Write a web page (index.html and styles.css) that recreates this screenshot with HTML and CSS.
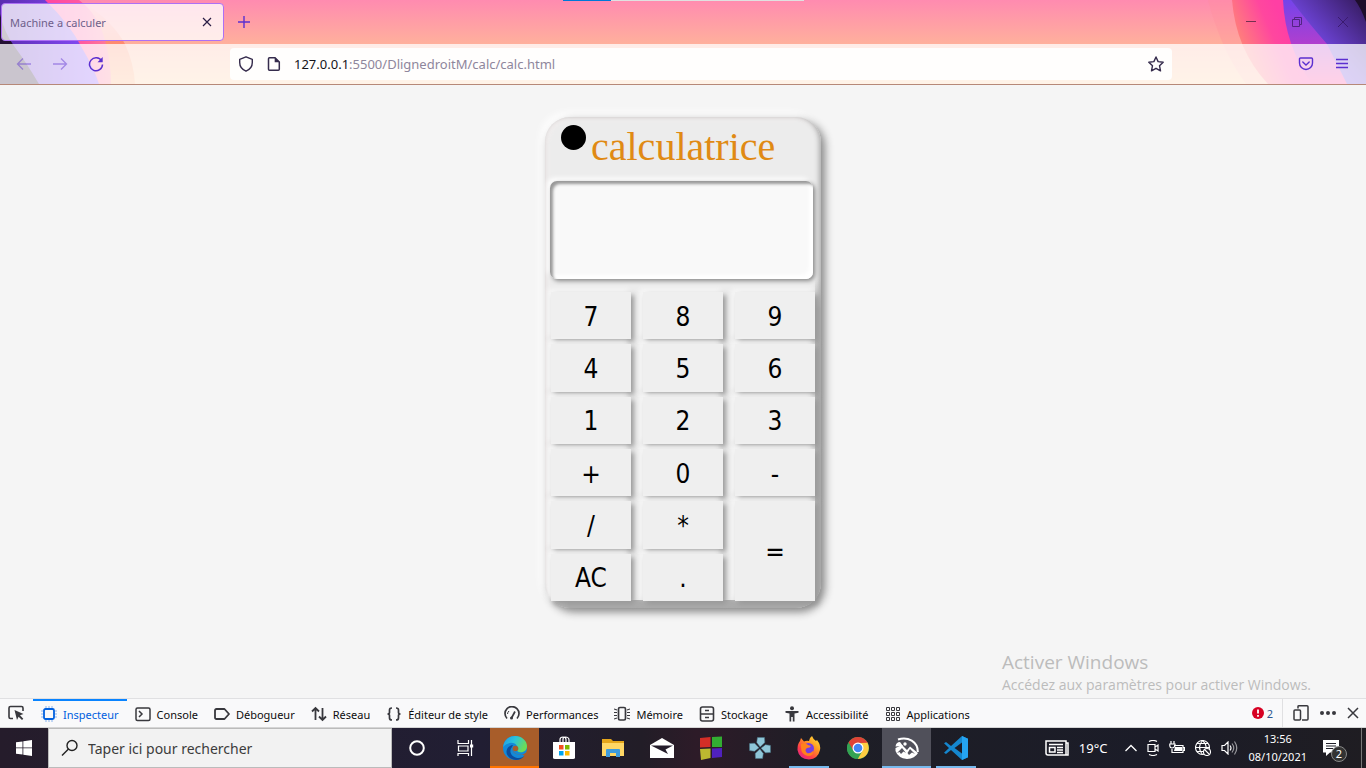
FILE: index.html
```html
<!DOCTYPE html>
<html lang="fr">
<head>
<meta charset="utf-8">
<title>Machine a calculer</title>
<link rel="stylesheet" href="styles.css">
</head>
<body>
<header class="browser">
  <svg class="art art-left" width="140" height="84" viewBox="0 0 140 84" aria-hidden="true">
    <defs>
      <linearGradient id="la" x1="0" y1="0" x2="1" y2="0"><stop offset="0" stop-color="#ff2fa0"/><stop offset=".75" stop-color="#ff5aa0"/><stop offset="1" stop-color="#ff7f96"/></linearGradient>
      <linearGradient id="lb" x1="0" y1="0" x2="1" y2="0"><stop offset="0" stop-color="#5a2bb0"/><stop offset="1" stop-color="#8a50ff"/></linearGradient>
      <linearGradient id="lc" x1="0" y1="0" x2="0" y2="1"><stop offset="0" stop-color="#ff8fb0"/><stop offset=".5" stop-color="#ff8a70"/><stop offset="1" stop-color="#ffb27a"/></linearGradient>
    </defs>
    <path d="M80 0Q112 20 125 44Q134 64 135 84H60V0Z" fill="url(#lc)"/>
    <path d="M0 0H79Q98 14 105 40Q111 62 111 84H0Z" fill="url(#la)"/>
    <path d="M0 0H45Q70 24 82 48Q94 68 99 84H0Z" fill="url(#lb)"/>
    <path d="M0 14Q4 32 14 46Q26 62 39 84H0Z" fill="#241033"/>
  </svg>
  <svg class="art art-right" width="180" height="84" viewBox="0 0 180 84" aria-hidden="true">
    <defs>
      <linearGradient id="ra" gradientUnits="userSpaceOnUse" x1="46" y1="30" x2="92" y2="10"><stop offset="0" stop-color="#ff8478"/><stop offset=".7" stop-color="#ff479e"/><stop offset="1" stop-color="#ff3fa4"/></linearGradient>
      <linearGradient id="rb" x1="0" y1="0" x2="0" y2="1"><stop offset="0" stop-color="#7444ea"/><stop offset=".5" stop-color="#ad3fd0"/><stop offset="1" stop-color="#ff3f9b"/></linearGradient>
      <linearGradient id="rc" x1="1" y1="0" x2="0" y2="1"><stop offset="0" stop-color="#33195a"/><stop offset=".5" stop-color="#6840cc"/><stop offset="1" stop-color="#8b57ff"/></linearGradient>
    </defs>
    <path d="M22 0Q35 50 60 84H100V0Z" fill="#ff8f9c" opacity=".3"/>
    <path d="M46 0Q50 50 82 84H180V0Z" fill="url(#ra)"/>
    <path d="M97 0Q99 46 126 84H180V0Z" fill="url(#rb)"/>
    <path d="M105 0Q125 26 141 44L161 84H180V0Z" fill="url(#rc)"/>
    <path d="M169 0Q175 8 180 22V0Z" fill="#1d0d2b"/>
  </svg>
  <div class="progress"></div>
  <div class="tabbar">
    <div class="tab"><span>Machine a calculer</span>
      <button class="icon-btn" aria-label="Fermer l'onglet"><svg width="10" height="10" viewBox="0 0 10 10" fill="none" stroke="#2b1d45" stroke-width="1.2"><path d="M1 1L9 9M9 1L1 9"/></svg></button>
    </div>
    <button class="icon-btn new-tab" aria-label="Nouvel onglet"><svg width="12" height="12" viewBox="0 0 12 12" fill="none" stroke="#5b2fd0" stroke-width="1.4"><path d="M6 0V12M0 6H12"/></svg></button>
    <div class="window-controls">
      <button class="icon-btn" aria-label="Réduire"><svg width="10" height="10" viewBox="0 0 10 10" fill="none" stroke="#75304f"><path d="M0 4.500H10"/></svg></button>
      <button class="icon-btn" aria-label="Restaurer"><svg width="10" height="10" viewBox="0 0 10 10" fill="none" stroke="#522482"><path d="M.5 2.500H7.500V9.500H.5ZM2.500 2V.5H9.500V7.500H8"/></svg></button>
      <button class="icon-btn" aria-label="Fermer"><svg width="10" height="10" viewBox="0 0 10 10" fill="none" stroke="#3b1b70"><path d="M0 0L10 10M10 0L0 10"/></svg></button>
    </div>
  </div>
  <nav class="navbar">
    <div class="nav-buttons">
      <button class="icon-btn dim" aria-label="Précédent"><svg width="16" height="16" viewBox="0 0 16 16" fill="none" stroke="#5b2fd0" stroke-width="1.3"><path d="M15 8H1.500M7 2.500L1.500 8L7 13.500"/></svg></button>
      <button class="icon-btn dim" aria-label="Suivant"><svg width="16" height="16" viewBox="0 0 16 16" fill="none" stroke="#5b2fd0" stroke-width="1.3"><path d="M1 8H14.500M9 2.500L14.500 8L9 13.500"/></svg></button>
      <button class="icon-btn" aria-label="Actualiser"><svg width="16" height="16" viewBox="0 0 16 16" fill="none" stroke="#5b2fd0" stroke-width="1.5"><path d="M13.600 5A6.500 6.500 0 1 0 14.500 8.500"/><path d="M14.700 1V6.200H9.500Z" fill="#5b2fd0" stroke="none"/></svg></button>
    </div>
    <div class="urlbar">
      <svg width="16" height="16" viewBox="0 0 16 16" fill="none" stroke="#352b4c" stroke-width="1.4"><path d="M8 .8L14.300 3.300V6.500C14.300 10.500 12 13.500 8 15.200C4 13.500 1.700 10.500 1.700 6.500V3.300Z" stroke-linejoin="round"/></svg>
      <svg width="16" height="16" viewBox="0 0 16 16" fill="none" stroke="#352b4c" stroke-width="1.5"><path d="M3.500 1.700H9L13.300 6V13.300Q13.300 14.300 12.300 14.300H3.500Q2.500 14.300 2.500 13.300V2.700Q2.500 1.700 3.500 1.700Z"/><path d="M8.700 1.200V6.300H13.800Z" fill="#352b4c" stroke="none"/></svg>
      <span class="url"><b>127.0.0.1</b>:5500/DlignedroitM/calc/calc.html</span>
      <button class="icon-btn star" aria-label="Marque-page"><svg width="16" height="16" viewBox="0 0 16 16" fill="none" stroke="#352b4c" stroke-width="1.4" stroke-linejoin="round"><path d="M8 1L10.100 5.600L15.200 6.200L11.500 9.700L12.500 14.800L8 12.300L3.500 14.800L4.500 9.700L.8 6.200L5.900 5.600Z"/></svg></button>
    </div>
    <div class="nav-end">
      <button class="icon-btn" aria-label="Pocket"><svg width="16" height="16" viewBox="0 0 16 16" fill="none" stroke="#5b2fd0" stroke-width="1.4" stroke-linecap="round"><path d="M2.500 2H13.500Q14.500 2 14.500 3V7A6.500 6.500 0 0 1 1.500 7V3Q1.500 2 2.500 2Z"/><path d="M4.800 6L8 9L11.200 6"/></svg></button>
      <button class="icon-btn" aria-label="Menu"><svg width="12" height="12" viewBox="0 0 12 12" fill="none" stroke="#5b2fd0" stroke-width="1.300"><path d="M0 1.500H12M0 5.500H12M0 9.500H12"/></svg></button>
    </div>
  </nav>
</header>

<main class="page">
  <section class="calculator">
    <div class="brand"><span class="dot"></span><h1>calculatrice</h1></div>
    <input class="display" type="text" aria-label="Résultat" readonly>
    <div class="keypad">
      <button>7</button><button>8</button><button>9</button>
      <button>4</button><button>5</button><button>6</button>
      <button>1</button><button>2</button><button>3</button>
      <button>+</button><button>0</button><button>-</button>
      <button>/</button><button>*</button><button class="equals">=</button>
      <button>AC</button><button>.</button>
    </div>
  </section>
  <aside class="activation"><p class="activation-title">Activer Windows</p><p>Accédez aux paramètres pour activer Windows.</p></aside>
</main>

<section class="devtools">
  <button class="picker" aria-label="Sélectionner un élément"><svg width="16" height="16" viewBox="0 0 16 16" fill="none" stroke="#38383d" stroke-width="1.600"><path d="M5 13.500H2.500Q1 13.500 1 12V3Q1 1.500 2.500 1.500H13.500Q15 1.500 15 3V6"/><path d="M6.500 5L15.500 9L12 10.300L15.300 13.800L14 15L10.600 11.700L9 15Z" fill="#38383d" stroke="none"/></svg></button>
  <div class="tools">
    <button class="tool active"><svg width="16" height="16" viewBox="0 0 16 16" fill="none" stroke="#0060df" stroke-width="1.800"><rect x="3" y="3" width="10" height="10" rx="1.500"/><path d="M5 0V2M11 0V2M5 14V16M11 14V16M0 5H2M0 11H2M14 5H16M14 11H16M8 0V2M8 14V16M0 8H2M14 8H16" stroke-width="1" opacity=".45"/></svg>Inspecteur</button>
    <button class="tool"><svg width="16" height="16" viewBox="0 0 16 16" fill="none" stroke="#38383d" stroke-width="1.500"><rect x="1" y="2" width="14" height="12.500" rx="1.500"/><path d="M4 5L7 8L4 11"/></svg>Console</button>
    <button class="tool"><svg width="16" height="16" viewBox="0 0 16 16" fill="none" stroke="#38383d" stroke-width="1.800"><path d="M2.500 3H10.500L15 8L10.500 13H2.500Q1 13 1 11.500V4.500Q1 3 2.500 3Z" stroke-linejoin="round"/></svg>Débogueur</button>
    <button class="tool"><svg width="16" height="16" viewBox="0 0 16 16" fill="none" stroke="#38383d" stroke-width="1.800"><path d="M4.500 14V2M1 5.500L4.500 2L8 5.500M11.500 2V14M8 10.500L11.500 14L15 10.500"/></svg>Réseau</button>
    <button class="tool"><svg width="16" height="16" viewBox="0 0 16 16" fill="none" stroke="#38383d" stroke-width="1.700"><path d="M6 2Q3.500 2 3.500 4V6.500Q3.500 8 1.500 8Q3.500 8 3.500 9.500V12Q3.500 14 6 14M10 2Q12.500 2 12.500 4V6.500Q12.500 8 14.500 8Q12.500 8 12.500 9.500V12Q12.500 14 10 14"/></svg>Éditeur de style</button>
    <button class="tool"><svg width="16" height="16" viewBox="0 0 16 16" fill="none" stroke="#38383d" stroke-width="1.700"><path d="M3 12.500A7 7 0 1 1 13 12.500"/><path d="M3.500 8A4.500 4.500 0 0 1 5 5" stroke-width="1"/><path d="M7.500 12L11 5.500"/><circle cx="7.500" cy="12" r="1.500" fill="#38383d" stroke="none"/></svg>Performances</button>
    <button class="tool"><svg width="16" height="16" viewBox="0 0 16 16" fill="none" stroke="#38383d" stroke-width="1.700"><rect x="4.500" y="1.500" width="7" height="12.500" rx="1.500"/><path d="M0 3L3 4M0 6.500H3M0 9.500H3M0 13L3 12M16 3L13 4M16 6.500H13M16 9.500H13M16 13L13 12" stroke-width="1.100"/></svg>Mémoire</button>
    <button class="tool"><svg width="16" height="16" viewBox="0 0 16 16" fill="none" stroke="#38383d" stroke-width="1.600"><rect x="1.500" y="1" width="13" height="14" rx="2"/><path d="M2 8H14M6 4.500H10M6 11.500H10"/></svg>Stockage</button>
    <button class="tool"><svg width="16" height="16" viewBox="0 0 16 16" fill="#38383d"><circle cx="8" cy="2.200" r="2"/><path d="M1.500 5H14.500V6.800L10.500 7.500V15.500H8.800V11H7.200V15.500H5.500V7.500L1.500 6.800Z"/></svg>Accessibilité</button>
    <button class="tool"><svg width="16" height="16" viewBox="0 0 16 16" fill="none" stroke="#38383d" stroke-width="1"><path d="M1.500 1.500h3v3h-3zM6.500 1.500h3v3h-3zM11.500 1.500h3v3h-3zM1.500 6.500h3v3h-3zM6.500 6.500h3v3h-3zM11.500 6.500h3v3h-3zM1.500 11.500h3v3h-3zM6.500 11.500h3v3h-3zM11.500 11.500h3v3h-3z" stroke-linejoin="round"/></svg>Applications</button>
  </div>
  <button class="errors"><svg width="12" height="12" viewBox="0 0 12 12"><circle cx="6" cy="6" r="6" fill="#d70022"/><path d="M6 2.500V6.500M6 8V9.700" stroke="#fff" stroke-width="1.800"/></svg>2</button>
  <div class="dev-end">
    <button class="icon-btn" aria-label="Vue adaptative"><svg width="16" height="16" viewBox="0 0 16 16" fill="none" stroke="#38383d" stroke-width="1.500"><path d="M5 3.500V1.500Q5 .8 6 .8H14Q15 .8 15 1.800V14Q15 15 14 15H9"/><rect x="1" y="5" width="6.500" height="10" rx="1"/></svg></button>
    <button class="icon-btn" aria-label="Options"><svg width="16" height="16" viewBox="0 0 16 16" fill="#38383d"><circle cx="2" cy="8" r="2"/><circle cx="8" cy="8" r="2"/><circle cx="14" cy="8" r="2"/></svg></button>
    <button class="icon-btn" aria-label="Fermer les outils"><svg width="12" height="12" viewBox="0 0 12 12" fill="none" stroke="#38383d" stroke-width="1.500"><path d="M1 1L11 11M11 1L1 11"/></svg></button>
  </div>
</section>

<footer class="taskbar">
  <button class="start" aria-label="Démarrer"><svg width="16" height="16" viewBox="0 0 16 16" fill="#fff"><path d="M0 2.300L6.500 1.400V7.500H0ZM7.300 1.300L16 0V7.500H7.300ZM0 8.300H6.500V14.600L0 13.700ZM7.300 8.300H16V16L7.300 14.700Z"/></svg></button>
  <label class="search"><svg width="18" height="18" viewBox="0 0 18 18" fill="none" stroke="#222" stroke-width="1.400"><circle cx="11" cy="6.500" r="5"/><path d="M7.500 10L1 16.500"/></svg><input type="text" aria-label="Rechercher" placeholder="Taper ici pour rechercher"></label>
  <div class="apps">
    <button class="app" aria-label="Cortana"><svg width="16" height="16" viewBox="0 0 16 16"><circle cx="8" cy="8" r="6.800" fill="none" stroke="#fff" stroke-width="2"/></svg></button>
    <button class="app" aria-label="Vue des tâches"><svg width="17" height="16" viewBox="0 0 17 16" fill="none" stroke="#fff" stroke-width="1.200"><path d="M1 0V3.500H11.500V0M1.500 6H11V11H1.500ZM1 16V13.500H11.500V16M14.500 0V16"/><path d="M13 4.500H16.200V7.500H13Z" fill="#fff" stroke="none"/></svg></button>
    <button class="app edge" aria-label="Edge"><svg width="24" height="24" viewBox="0 0 24 24"><defs><linearGradient id="eg" x1="0" y1="0" x2="1" y2=".4"><stop offset="0" stop-color="#2196e8"/><stop offset=".5" stop-color="#2ac3dc"/><stop offset="1" stop-color="#6bdc58"/></linearGradient></defs><circle cx="12" cy="12" r="12" fill="#1389d8"/><path d="M0 11C1 4 6 0 12 0C19 0 24 5 24 10C24 15 20 17 16 16C13 15.300 15 14 14.500 11C13 6 5 5 0 11Z" fill="url(#eg)"/><path d="M9 11C5 16 9 22 16 22C20 22 22 19 22 19C19 24 13 25 9 23C1 20 2 10 10 9Z" fill="#0c4c9c"/><path d="M10 11C8 15 12 20 20 18.500L23 16.500V20L18 18.500C13 19 8 15 10 11Z" fill="#a85d2a"/><circle cx="12.500" cy="12.500" r="2.800" fill="#a85d2a"/></svg></button>
    <button class="app" aria-label="Microsoft Store"><svg width="24" height="24" viewBox="0 0 24 24"><path d="M8 7V3.500Q8 1 11 1Q14 1 14 3.500V7M11 7V3.500Q11 1 13 1Q17 1 17 4V7" fill="none" stroke="#fff" stroke-width="1.200"/><path d="M1 6H23V21.500Q23 23 21 23H3Q1 23 1 21.500Z" fill="#fff"/><path d="M7 9H11.500V13.500H7Z" fill="#f25022"/><path d="M13 9H17.500V13.500H13Z" fill="#7fba00"/><path d="M7 15H11.500V19.500H7Z" fill="#00a4ef"/><path d="M13 15H17.500V19.500H13Z" fill="#ffb900"/></svg></button>
    <button class="app" aria-label="Explorateur de fichiers"><svg width="22" height="20" viewBox="0 0 22 20"><path d="M0 1H9L11 3H22V18H0Z" fill="#e5a61b"/><path d="M0 5H22V18H0Z" fill="#ffd765"/><path d="M4 19V12Q4 11 5 11H17Q18 11 18 12V19H14V15H8V19Z" fill="#3e9bdc"/></svg></button>
    <button class="app" aria-label="Courrier"><svg width="24" height="20" viewBox="0 0 24 20"><path d="M0 7L12 0L24 7V20H0Z" fill="#fff"/><path d="M1 7.500H23L15.500 11.500L18 16Z" fill="#241c2a"/></svg></button>
    <button class="app" aria-label="Jeu"><svg width="22" height="24" viewBox="0 0 22 24"><path d="M0 2L10.500 1V11L0 11.500Z" fill="#d42e27"/><path d="M12 1L22 .5V11H12Z" fill="#32ad32"/><path d="M0 13L10.500 12.500V22L1 24Z" fill="#bcb830"/><path d="M12 12.500L22 12V21L12 22Z" fill="#5021bd"/></svg></button>
    <button class="app" aria-label="Jeux"><svg width="22" height="22" viewBox="0 0 22 22" fill="#8fc6d8" stroke="#497789" stroke-width=".5"><g transform="rotate(8 11 11)"><path d="M7 1L14 0L15 5L11 10L7 6Z"/><path d="M7 1L14 0L15 5L11 10L7 6Z" transform="rotate(90 11 11)"/><path d="M7 1L14 0L15 5L11 10L7 6Z" transform="rotate(180 11 11)"/><path d="M7 1L14 0L15 5L11 10L7 6Z" transform="rotate(270 11 11)"/></g></svg></button>
    <button class="app running" aria-label="Firefox"><svg width="24" height="24" viewBox="0 0 24 24"><defs><linearGradient id="ff" x1="1" y1="0" x2=".2" y2="1"><stop offset="0" stop-color="#fff044"/><stop offset=".4" stop-color="#ff9a20"/><stop offset=".75" stop-color="#ff3c48"/><stop offset="1" stop-color="#e3258c"/></linearGradient></defs><path d="M3 5L4 2L7 5.500Q9 4.500 12 5Q12 2 15 0Q16 3 19 5L20 4Q24 9 23 14Q21 23 12 23.500Q2 23 .5 14Q.3 8 3 5Z" fill="url(#ff)"/><circle cx="11.500" cy="12.500" r="5.500" fill="#753ee2"/><path d="M4 8Q8 6 11 9L14 10Q13 12 10 12Q7 14 10 17Q13 18 16 15Q17 20 11 20Q4 19 4 11Z" fill="#ff811c"/></svg></button>
    <button class="app" aria-label="Chrome"><svg width="22" height="22" viewBox="0 0 22 22"><circle cx="11" cy="11" r="11" fill="#34a353"/><path d="M1.500 5.500A11 11 0 0 1 20.500 5.500L21 6H11L6.200 13.800Z" fill="#df4336"/><path d="M20.500 5.800A11 11 0 0 1 10.800 22L15.600 13.500L14 6Z" fill="#ffcd41"/><path d="M1.500 5.500L6.200 13.800L11 16L9.500 22A11 11 0 0 1 1.500 5.500Z" fill="#34a353"/><circle cx="11" cy="11" r="5.500" fill="#fff"/><circle cx="11" cy="11" r="4.300" fill="#4285f4"/></svg></button>
    <button class="app running current" aria-label="Photos"><svg width="24" height="22" viewBox="0 0 24 22"><path d="M3 2.500C13-1 23 5 22.800 15" fill="none" stroke="#fff" stroke-width="2"/><path d="M.5 11L7 8L12 13L15 9.500L23 16Q20 21.500 12 22Q3 21 .5 14Z" fill="#fff"/><path d="M.5 9.500Q1 5 5 5L8 9Z" fill="#fff"/><path d="M7 11L11 16L8.500 14.500L6 17L4.500 15L2 16ZM15 12L20 17L17 15.500L14 18L12.500 16Z" fill="#54545e"/><circle cx="10" cy="7" r="1.700" fill="#fff"/></svg></button>
    <button class="app running" aria-label="Visual Studio Code"><svg width="24" height="24" viewBox="0 0 24 24"><path d="M18 0L24 2.800V21.200L18 24L7 14L2 18L0 16.800L5 12L0 7.200L2 6L7 10Z" fill="#1587cf"/><path d="M18 6.500V17.500L10.500 12Z" fill="#1b1c28"/><path d="M18 0L24 2.800V21.200L18 24Z" fill="#25a4f2"/></svg></button>
  </div>
  <div class="tray">
    <svg width="24" height="16" viewBox="0 0 24 16" fill="none" stroke="#fff" stroke-width="1.500"><path d="M21 3H23V15H3Q1 15 1 13V1H21V15M4 4.500H18"/><path d="M4.500 7.500H10V12H4.500ZM12 7.500H18M12 10H18M12 12.500H18"/></svg>
    <span class="temp">19°C</span>
    <svg width="12" height="8" viewBox="0 0 12 8" fill="none" stroke="#fff" stroke-width="1.300"><path d="M.5 7L6 1.500L11.500 7"/></svg>
    <svg width="12" height="16" viewBox="0 0 12 16" fill="none" stroke="#fff" stroke-width="1.200"><path d="M2 1.500Q6-.5 10 1.500M2 14.500Q6 16.500 10 14.500M1 4.500H8V11.500H1ZM8 7L11 5V11L8 9"/></svg>
    <svg width="16" height="14" viewBox="0 0 16 14" fill="none" stroke="#fff" stroke-width="1.200"><path d="M5 4.500H14V11.500H3V8M2 0V3M5 0V3M.8 3H6V5Q5 7 3 7Q1 7 .8 5ZM14 6.500H15.500V9.500H14"/><path d="M6 6H13V10H5Z" fill="#fff" stroke="none"/></svg>
    <svg width="16" height="16" viewBox="0 0 16 16" fill="none" stroke="#fff" stroke-width="1.100"><circle cx="7.500" cy="7.500" r="7"/><path d="M.5 7.500H14M2 3.500H13M2 11.500H8M7.500 .5Q1.500 7.500 7.500 14.500M7.500 .5Q11.500 4 11 8"/><circle cx="12" cy="12" r="3.500" fill="#1b1c26"/><path d="M9.500 9.500L14.500 14.500"/></svg>
    <svg width="17" height="14" viewBox="0 0 17 14" fill="none" stroke="#fff" stroke-width="1.200"><path d="M1 4.500H3.500L7 1V13L3.500 9.500H1ZM9 4.500Q11 7 9 9.500"/><path d="M11 2.500Q14.500 7 11 11.500M13.500 .5Q18 7 13.500 13.500" opacity=".55"/></svg>
    <div class="clock"><time>13:56</time><time>08/10/2021</time></div>
    <button class="notice" aria-label="2 notifications"><svg width="16" height="16" viewBox="0 0 16 16"><path d="M0 0H16V12.500H7L3 16V12.500H0Z" fill="#fff"/><path d="M3 3.500H13M3 6H13M3 8.500H10" stroke="#20202a"/></svg><span>2</span></button>
    <span class="show-desktop"></span>
  </div>
</footer>
</body>
</html>
```
FILE: styles.css
```css
* { box-sizing: border-box; }
body { margin: 0; height: 100vh; display: flex; flex-direction: column; overflow: hidden; background: #f5f5f5; font-family: "Noto Sans", "Open Sans", sans-serif; font-size: 12px; }
button, input { font: inherit; color: inherit; margin: 0; border: 0; background: none; padding: 0; }
svg { flex: none; display: block; }
.icon-btn { display: flex; align-items: center; justify-content: center; }

.browser { position: relative; flex: none; background: linear-gradient(#ff8bb0 0, #ffb09c 44px, #ffcf9f 84px); border-bottom: 1px solid #b68878; }
.art { position: absolute; top: 0; }
.art-left { left: 0; }
.art-right { right: 0; }
.progress { position: absolute; top: 0; left: 563px; width: 241px; height: 1px; background: linear-gradient(90deg, #0078d7 20%, #e0e0e0 20%); }
.tabbar { position: relative; display: flex; align-items: center; height: 44px; padding-left: 1px; }
.tab { display: flex; align-items: center; justify-content: space-between; width: 223px; height: 38px; padding: 0 11px 0 8px; border: 1px solid #ad70f5; border-radius: 4px; background: rgba(255, 255, 255, .78); color: #6e5f8a; font-family: "Noto Sans", "Open Sans", sans-serif; font-size: 11px; }
.new-tab { width: 40px; height: 40px; }
.window-controls { display: flex; margin-left: auto; }
.window-controls .icon-btn { width: 46px; height: 44px; }
.navbar { position: relative; display: flex; align-items: center; height: 40px; background: rgba(255, 255, 255, .76); }
.nav-buttons { display: flex; gap: 20px; width: 230px; padding-left: 16px; }
.dim { opacity: .45; }
.urlbar { display: flex; flex: 1; align-items: center; gap: 12px; height: 32px; padding: 0 8px; border-radius: 4px; background: rgba(255, 255, 255, .9); }
.url { color: #8e869c; font-size: 13px; font-family: "Noto Sans", "Open Sans", sans-serif; }
.url b { font-weight: 400; color: #15141a; }
.star { margin-left: auto; }
.nav-end { display: flex; align-items: center; gap: 22px; width: 194px; padding-right: 18px; justify-content: flex-end; }

.page { position: relative; flex: 1; min-height: 0; padding-top: 32px; background: #f5f5f5; }
.calculator { width: 276px; margin: 0 auto; border-radius: 25px; background: #ececec; box-shadow: 4px 4px 8px #888, -4px -4px 8px #fff, inset -2px -1px 5px #aaa, inset 2px 2px 5px #f4efef; }
.brand { display: flex; height: 64px; padding: 8px 16px 0; gap: 5px; }
.dot { width: 25px; height: 25px; border-radius: 50%; background: #000; }
.brand h1 { margin: 0; color: #e08a14; font: 400 40px/44px "Liberation Serif", serif; }
.display { display: block; width: 263px; height: 98px; margin-left: 5px; border-radius: 7px; background: #f9f9f9; box-shadow: inset 3px 3px 3px #999, inset -4px -4px 4px #fff, 2px 2px 4px #888, -3px -3px 5px #fff; }
.keypad { display: grid; grid-template-columns: repeat(3, 1fr); grid-template-rows: repeat(6, 1fr); gap: 5px 12px; height: 329px; padding: 13px 6px 7px; border-radius: 0 0 25px 25px; background: linear-gradient(transparent, #aaa 30px) right / 6px 100% no-repeat, linear-gradient(90deg, transparent, #aaa 24px) bottom / 100% 8px no-repeat; }
.keypad button { padding-top: 2px; background: #efefef; box-shadow: 3px 3px 5px #999, -3px -3px 5px #f8f8f8; font: 26px "DejaVu Sans Condensed", "DejaVu Sans", sans-serif; color: #000; }
.keypad .equals { grid-row: span 2; }
.activation { position: absolute; right: 55px; bottom: 3px; color: #bcbcbc; font-size: 14px; font-family: "Open Sans", sans-serif; line-height: 20px; }
.activation p { margin: 0; }
.activation .activation-title { font-size: 19px; line-height: 26px; }

.devtools { display: flex; flex: none; align-items: stretch; height: 30px; border-top: 1px solid #e0e0e2; border-bottom: 1px solid #d5d5d5; background: #f9f9fa; color: #0c0c0d; }
.picker { width: 33px; padding-left: 8px; }
.tools { display: flex; flex: 1; }
.tool { display: flex; align-items: center; gap: 6px; padding: 0 8px; border-top: 2px solid transparent; white-space: nowrap; font-size: 11px; }
.tool.active { color: #0060df; border-top-color: #0a84ff; }
.errors { display: flex; align-items: center; gap: 3px; padding-right: 9px; color: #2a5590; font-size: 11px; }
.dev-end { display: flex; align-items: center; gap: 11px; padding: 0 7px 0 10px; border-left: 1px solid #e0e0e2; }

.taskbar { display: flex; flex: none; height: 40px; background: linear-gradient(90deg, #251c2b, #211e33 35%, #221d27 47%, #2d1b28 51%, #1e1e26 60%, #1b1c28 85%, #1f1d22); color: #fff; }
.start { display: flex; align-items: center; justify-content: center; width: 48px; }
.search { display: flex; align-items: center; gap: 9px; width: 344px; padding-left: 12px; border: 1px solid #bbb; background: #f2f2f2; }
.search input { flex: 1; outline: 0; font-size: 14px; }
.search input::placeholder { color: #3c3c3c; opacity: 1; }
.apps { display: flex; flex: 1; }
.app { display: flex; align-items: center; justify-content: center; width: 49px; }
.edge { background: #a85d2a; border-bottom: 2px solid #ff7300; padding-top: 2px; }
.running { background: linear-gradient(#76b9ed, #76b9ed) center bottom / 40px 2px no-repeat; }
.current { background-color: #50505a; background-size: 100% 2px; }
.tray { display: flex; align-items: center; gap: 10px; }
.temp { font-size: 13px; margin-right: 8px; }
.tray .clock { display: flex; flex-direction: column; align-items: center; line-height: 18px; font-size: 11px; }
.notice { position: relative; margin: 0 14px 0 6px; padding: 0 8px 0 0; }
.notice span { position: absolute; right: 0; top: 6px; width: 16px; height: 16px; border: 1px solid #888; border-radius: 50%; background: #333; font-size: 11px; line-height: 14px; }
.show-desktop { width: 5px; align-self: stretch; margin-left: -10px; border-left: 1px solid #777; }
```
